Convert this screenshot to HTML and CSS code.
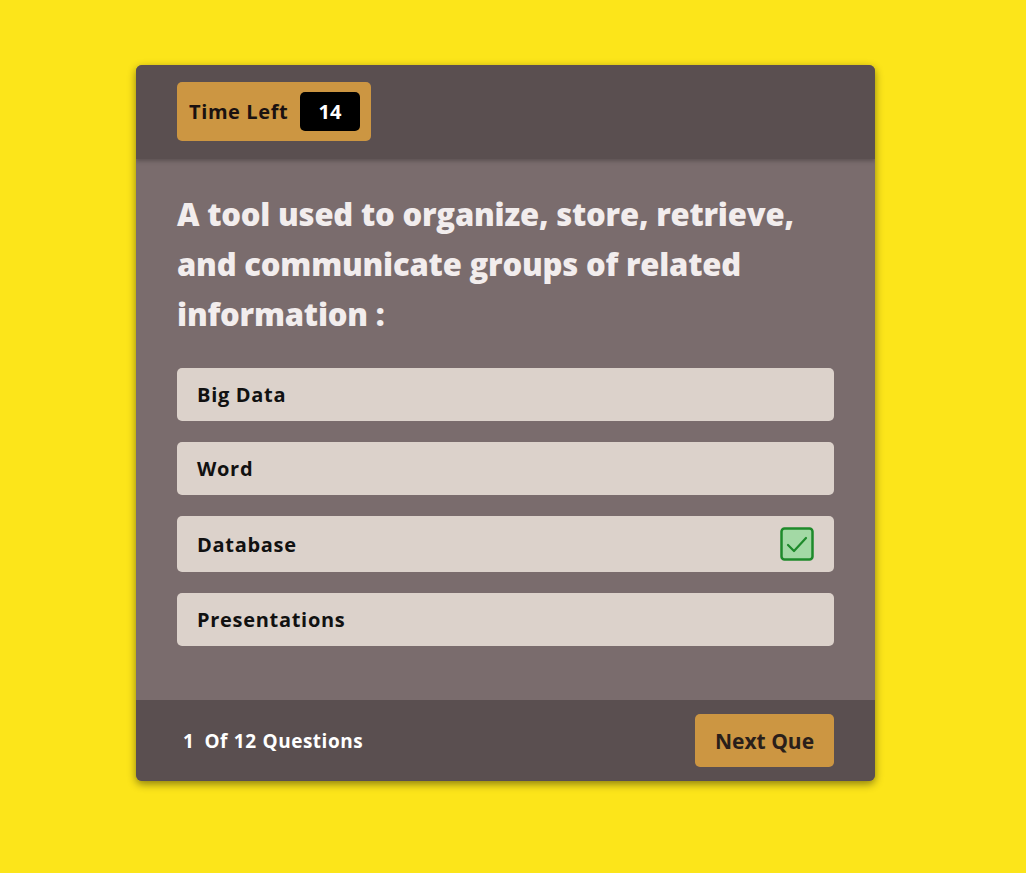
FILE: index.html
```html
<!DOCTYPE html>
<html>
<head>
<meta charset="utf-8">
<link rel="stylesheet" href="styles.css">
</head>
<body>
<div class="page">
  <div class="card">
    <header class="card-head">
      <div class="timer">
        <span class="timer-label">Time Left</span>
        <span class="timer-sec">14</span>
      </div>
    </header>
    <section class="card-body">
      <h2 class="question">A tool used to organize, store, retrieve, and communicate groups of related information :</h2>
      <div class="options">
        <div class="option">Big Data</div>
        <div class="option">Word</div>
        <div class="option option-correct">Database
          <span class="check">
            <svg width="34" height="34" viewBox="0 0 34 34"><rect x="1.5" y="1.5" width="31" height="31" rx="3" fill="#a3d9a5" stroke="#1e8a2b" stroke-width="2.5"/><path d="M8 18 L14 24 L26 11" fill="none" stroke="#1e8a2b" stroke-width="2.2" stroke-linecap="round" stroke-linejoin="round"/></svg>
          </span>
        </div>
        <div class="option">Presentations</div>
      </div>
    </section>
    <footer class="card-foot">
      <div class="count"><span>1</span>Of<span>12</span>Questions</div>
      <button class="next">Next Que</button>
    </footer>
  </div>
</div>
</body>
</html>
```
FILE: styles.css
```css
* { box-sizing: border-box; }
html, body { margin: 0; padding: 0; }
body {
  background: #fce51a;
  font-family: "Open Sans", "Noto Sans", sans-serif;
  width: 1026px;
  height: 873px;
  overflow: hidden;
}
.page {
  padding-top: 65px;
  padding-left: 136px;
}
.card {
  width: 739px;
  border-radius: 6px;
  overflow: hidden;
  box-shadow: 0 3px 8px rgba(0,0,0,0.45);
  background: #7a6c6d;
}
.card-head {
  height: 94px;
  background: #5a4f50;
  padding: 17px 41px 0;
  box-shadow: 0 2px 4px rgba(0,0,0,0.25);
  position: relative;
}
.timer {
  display: inline-flex;
  align-items: center;
  height: 59px;
  width: 194px;
  background: #cc9642;
  border-radius: 5px;
  padding: 0 11px 0 12px;
  justify-content: space-between;
}
.timer-label {
  font-weight: 700;
  font-size: 20px;
  color: #1a1110;
  letter-spacing: 0.6px;
}
.timer-sec {
  background: #000;
  color: #fff;
  font-weight: 700;
  font-size: 20px;
  width: 60px;
  height: 39px;
  border-radius: 5px;
  display: flex;
  align-items: center;
  justify-content: center;
}
.card-body {
  padding: 30px 41px 54px;
}
.question {
  margin: 0 0 29px;
  max-width: 635px;
  color: #f2eded;
  font-size: 31px;
  font-weight: 800;
  line-height: 50px;
  letter-spacing: -0.2px;
}
.options {
  display: flex;
  flex-direction: column;
  gap: 21px;
}
.option {
  height: 53px;
  background: #dcd2cb;
  border-radius: 5px;
  padding: 0 20px;
  display: flex;
  align-items: center;
  justify-content: space-between;
  font-weight: 700;
  font-size: 20px;
  letter-spacing: 0.7px;
  color: #111;
}
.option-correct { height: 56px; }
.check { display: flex; }
.card-foot {
  height: 81px;
  background: #5a4f50;
  padding: 0 41px 0 47px;
  display: flex;
  align-items: center;
  justify-content: space-between;
}
.count {
  color: #fff;
  font-weight: 700;
  font-size: 19px;
  letter-spacing: 0.5px;
  display: flex;
  gap: 6px;
}
.count span:first-child { margin-right: 4px; }
.next {
  height: 53px;
  width: 139px;
  background: #cc9642;
  border: none;
  border-radius: 5px;
  font-family: inherit;
  font-weight: 700;
  font-size: 21px;
  color: #2a1f1a;
  padding: 0;
}
```
